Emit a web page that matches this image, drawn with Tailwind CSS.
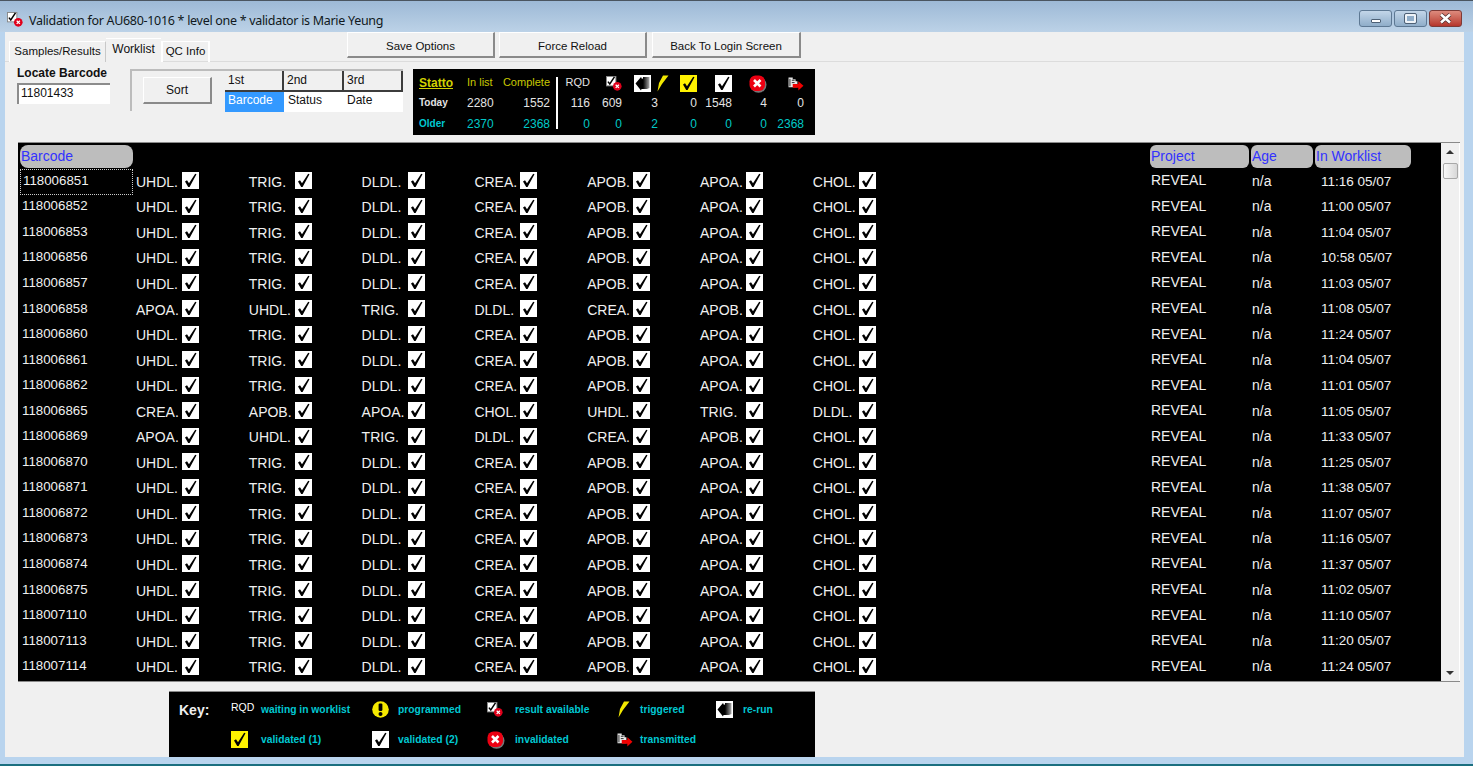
<!DOCTYPE html>
<html lang="en">
<head>
    <meta charset="UTF-8">
    <title>Validation for AU680-1016</title>
    <script src="https://cdn.jsdelivr.net/npm/@tailwindcss/browser@4"></script>
</head>
<body class="bg-[#b9d4ee] overflow-hidden font-['Liberation_Sans',Arial,sans-serif]">
    <!-- shared icons -->
    <svg class="absolute w-0 h-0">
        <defs>
            <linearGradient id="fade" x1="0" x2="1" y1="0" y2="0">
                <stop offset="0" stop-color="#000"/>
                <stop offset="1" stop-color="#aaa"/>
            </linearGradient>
        </defs>
        <symbol id="check" viewBox="0 0 17 17">
            <path d="M3 9.5 L5 8.3 L7 11.3 L13.2 1.8 L14.5 2.3 L7.6 15 L6.2 15 Z" fill="#000"/>
        </symbol>
        <symbol id="result" viewBox="0 0 17 16">
            <rect x="0.5" y="0.5" width="10" height="10" fill="#fff" stroke="#888"/>
            <path d="M2 6 L4 8.5 L9 1" fill="none" stroke="#000" stroke-width="1.6"/>
            <circle cx="12" cy="11" r="4.6" fill="#e0001b"/>
            <path d="M10.3 9.3 L13.7 12.7 M13.7 9.3 L10.3 12.7" stroke="#fff" stroke-width="1.3"/>
        </symbol>
        <symbol id="rerun" viewBox="0 0 17 17">
            <rect width="17" height="17" fill="#fff"/>
            <path d="M1.5 8.5 L7 2 L8 4 L10 2.5 L10 14 L7.5 14 L7 15.5 Z" fill="#000"/>
            <path d="M9 2 H15.5 V13 L13 14 H9 Z" fill="url(#fade)"/>
        </symbol>
        <symbol id="bolt" viewBox="0 0 13 17">
            <path d="M7 0.5 L12.5 0.5 L6 9 L1.5 16.5 L3 8 Z" fill="#f2e800"/>
        </symbol>
        <symbol id="invalid" viewBox="0 0 18 18">
            <circle cx="9.5" cy="9.8" r="8" fill="#777"/>
            <rect x="0.5" y="0.5" width="15.5" height="15.5" rx="6" fill="#ec0012"/>
            <path d="M5 5 L11.5 11.5 M11.5 5 L5 11.5" stroke="#fff" stroke-width="2.6"/>
        </symbol>
        <symbol id="transmit" viewBox="0 0 17 15">
            <path d="M0.5 0.5 H5 V2.5 H8 V4.5 H10 V11 H0.5 Z" fill="#e8e8e8"/>
            <path d="M2 2 V10 M4 3.5 H7 M4 6 H7" stroke="#222" stroke-width="1"/>
            <path d="M5 7.5 H11 V4.5 L16.5 9.5 L11 14.5 V11.5 H5 Z" fill="#f00000"/>
        </symbol>
        <symbol id="programmed" viewBox="0 0 17 17">
            <circle cx="8.5" cy="8.5" r="8.3" fill="#f5e900"/>
            <rect x="6.6" y="2.5" width="3.8" height="7.5" rx="1.2" fill="#000"/>
            <circle cx="8.5" cy="13" r="2" fill="#000"/>
        </symbol>
    </svg>

    <div class="w-[1473px] h-[766px] flex flex-col border-b-2 border-[#1b6f80] overflow-hidden">
        <!-- Title bar -->
        <div class="h-[32px] shrink-0 flex items-center pl-[7px] pr-[11px] pt-[6px] bg-gradient-to-b from-[#9db9d6] to-[#bcd2e7] border-t border-[#4a5560]">
            <svg width="16" height="15" viewBox="0 0 17 16"><use href="#result"/></svg>
            <span class="ml-[6px] mt-[3px] text-[12.5px] text-[#101820] font-['Noto_Sans',sans-serif] tracking-[-0.3px]">Validation for AU680-1016 * level one * validator is Marie Yeung</span>
            <div class="ml-auto flex gap-[2px] -mt-[2px]">
                <div class="w-[33px] h-[17px] rounded-[3px] border border-[#5d7893] bg-gradient-to-b from-[#c3d6e9] to-[#8fadc9] flex items-center justify-center">
                    <div class="w-[10px] h-[4px] mt-[4px] rounded-[1px] bg-white border border-[#4d6075]"></div>
                </div>
                <div class="w-[33px] h-[17px] rounded-[3px] border border-[#5d7893] bg-gradient-to-b from-[#c3d6e9] to-[#8fadc9] flex items-center justify-center">
                    <div class="w-[11px] h-[9px] rounded-[1px] border-2 border-[#eef3f8] outline outline-[#4d6075] bg-[#8fadc9]"></div>
                </div>
                <div class="w-[33px] h-[17px] rounded-[3px] border border-[#7d3a36] bg-gradient-to-b from-[#dd8b7e] to-[#b5342b] flex items-center justify-center">
                    <svg width="13" height="11" viewBox="0 0 13 11"><path d="M2 1.5 L11 9.5 M11 1.5 L2 9.5" stroke="#4a2a2a" stroke-width="4"/><path d="M2 1.5 L11 9.5 M11 1.5 L2 9.5" stroke="#fff" stroke-width="2.6"/></svg>
                </div>
            </div>
        </div>

        <!-- Client area -->
        <div class="ml-[5px] w-[1459px] h-[725px] bg-[#f0f0f0] flex flex-col text-[#111]">
            <!-- Tabs and action buttons -->
            <div class="h-[30px] shrink-0 flex items-end border-b border-[#dcdcdc] pl-[4px] relative">
                <div class="h-[21px] w-[97px] mb-[-1px] bg-[#f0f0f0] border-t border-l border-[#fff] border-r border-r-[#c8c8c8] flex items-center justify-center text-[11.5px]">Samples/Results</div>
                <div class="h-[24px] w-[55px] mb-[-1px] bg-[#f0f0f0] border-t border-[#fff] flex items-center justify-center text-[12px] pb-[3px] relative z-10">Worklist</div>
                <div class="h-[21px] w-[49px] mb-[-1px] border-t border-[#fff] border-r-2 border-l-2 border-[#888] flex items-center justify-center text-[11.5px]">QC Info</div>
                <div class="ml-[137px] mb-[3px] flex">
                    <button class="w-[148px] h-[26px] pt-[4px] text-[11.5px] bg-[#f0f0f0] border-t border-l border-[#fff] border-r-2 border-b-2 border-r-[#8a8a8a] border-b-[#8a8a8a]">Save Options</button>
                    <button class="ml-[4px] w-[148px] h-[26px] pt-[4px] text-[11.5px] bg-[#f0f0f0] border-t border-l border-[#fff] border-r-2 border-b-2 border-r-[#8a8a8a] border-b-[#8a8a8a]">Force Reload</button>
                    <button class="ml-[5px] w-[149px] h-[26px] pt-[4px] text-[11.5px] bg-[#f0f0f0] border-t border-l border-[#fff] border-r-2 border-b-2 border-r-[#8a8a8a] border-b-[#8a8a8a]">Back To Login Screen</button>
                </div>
            </div>

            <!-- Locate, sort and statistics -->
            <div class="mt-[7px] h-[66px] shrink-0 flex items-start pl-[12px]">
                <div class="w-[93px]">
                    <div class="text-[12px] font-bold leading-[14px] mt-[-3px] h-[17px]">Locate Barcode</div>
                    <div class="h-[21px] bg-white border-t-2 border-l-2 border-[#8c8c8c] text-[12px] leading-[17px] pl-[2px]">11801433</div>
                </div>
                <div class="ml-[20px] w-[273px] h-[42px] flex border-t-2 border-l-2 border-[#bcbcbc]">
                    <div class="w-[94px] pl-[11px] pt-[6px]">
                        <button class="w-[69px] h-[27px] text-[12px] bg-[#f0f0f0] border-t border-l border-[#fff] border-r-2 border-b-2 border-r-[#8a8a8a] border-b-[#8a8a8a]">Sort</button>
                    </div>
                    <div class="flex-1 grid grid-cols-[59px_60px_59px] grid-rows-[21px_20px] text-[12px]">
                        <div class="border-r-2 border-b-2 border-[#3c3c3c] pl-[3px] leading-[19px]">1st</div>
                        <div class="border-r-2 border-b-2 border-[#3c3c3c] pl-[3px] leading-[19px]">2nd</div>
                        <div class="border-r-2 border-b-2 border-[#3c3c3c] pl-[3px] leading-[19px]">3rd</div>
                        <div class="bg-[#3399ff] text-white pl-[3px] leading-[17px]">Barcode</div>
                        <div class="bg-white pl-[4px] leading-[17px]">Status</div>
                        <div class="bg-white pl-[3px] leading-[17px]">Date</div>
                    </div>
                </div>

                <!-- Statto panel -->
                <div class="ml-[10px] w-[402px] h-[66px] bg-black pl-[6px] pt-[5px] grid grid-cols-[48px_26px_57px_8px_32px_32px_36px_39px_35px_35px_37px] grid-rows-[19px_20px_21px] items-center text-[12px] text-[#e4e4e4] whitespace-nowrap">
                    <div class="font-bold underline text-[#d2d200] -mt-[2px]">Statto</div>
                    <div class="text-[11px] text-[#c8c800] -mt-[2px]">In list</div>
                    <div class="text-right text-[11px] text-[#c8c800] -mt-[2px]">Complete</div>
                    <div class="row-span-3 h-[52px] w-[2px] bg-white self-start justify-self-end mt-[3px]"></div>
                    <div class="text-right text-[11px] -mt-[2px]">RQD</div>
                    <div class="flex justify-end"><svg width="16" height="15"><use href="#result"/></svg></div>
                    <div class="flex ml-[12px] w-[34px] gap-[5px]"><svg width="17" height="17" class="shrink-0"><use href="#rerun"/></svg><svg width="13" height="17" class="shrink-0"><use href="#bolt"/></svg></div>
                    <div class="flex justify-end"><div class="w-[17px] h-[17px] bg-[#fff200]"><svg width="17" height="17"><use href="#check"/></svg></div></div>
                    <div class="flex justify-end"><div class="w-[17px] h-[17px] bg-white"><svg width="17" height="17"><use href="#check"/></svg></div></div>
                    <div class="flex justify-end"><svg width="18" height="18"><use href="#invalid"/></svg></div>
                    <div class="flex justify-end"><svg width="16" height="14"><use href="#transmit"/></svg></div>

                    <div class="font-bold text-[10px] -mt-[1px]">Today</div>
                    <div class="text-right">2280</div>
                    <div class="text-right">1552</div>
                    <div class="text-right">116</div>
                    <div class="text-right">609</div>
                    <div class="text-right">3</div>
                    <div class="text-right">0</div>
                    <div class="text-right">1548</div>
                    <div class="text-right">4</div>
                    <div class="text-right">0</div>

                    <div class="font-bold text-[10px] text-[#00c8d2] -mt-[1px]">Older</div>
                    <div class="text-right text-[#00c8c8]">2370</div>
                    <div class="text-right text-[#00c8c8]">2368</div>
                    <div class="text-right text-[#00c8c8]">0</div>
                    <div class="text-right text-[#00c8c8]">0</div>
                    <div class="text-right text-[#00c8c8]">2</div>
                    <div class="text-right text-[#00c8c8]">0</div>
                    <div class="text-right text-[#00c8c8]">0</div>
                    <div class="text-right text-[#00c8c8]">0</div>
                    <div class="text-right text-[#00c8c8]">2368</div>
                </div>
            </div>

            <!-- Worklist table -->
            <div class="mt-[7px] ml-[13px] w-[1442px] h-[540px] shrink-0 flex border-t border-b border-[#8a8a8a]">
                <div class="w-[1423px] bg-black pt-[2px] text-[14px] text-[#f0f0f0]">
                    <div class="h-[23px] mb-[1px] pl-[2px] grid grid-cols-[113px_3px_791px_1fr_99px_2px_62px_2px_96px_30px] text-[14px] text-[#3232ff]">
                        <div class="bg-[#bdbdbd] rounded-[8px] pl-[1px] leading-[23px]">Barcode</div>
                        <div class="col-start-5 bg-[#bdbdbd] rounded-[6px] pl-[1px] leading-[23px]">Project</div>
                        <div class="col-start-7 bg-[#bdbdbd] rounded-[6px] pl-[1px] leading-[23px]">Age</div>
                        <div class="col-start-9 bg-[#bdbdbd] rounded-[6px] pl-[1px] leading-[23px]">In Worklist</div>
                    </div>
                    <div id="rows"></div>
                </div>
                <!-- Scrollbar -->
                <div class="w-[19px] bg-[#f0f0f0] border-r border-white flex flex-col items-center pt-[7px] pb-[6px]">
                    <div class="w-0 h-0 border-x-[4px] border-x-transparent border-b-[4px] border-b-[#333]"></div>
                    <div class="mt-[9px] w-[15px] h-[16px] rounded-[2px] border border-[#a8a8a8] bg-gradient-to-r from-[#f8f8f8] to-[#d8d8d8]"></div>
                    <div class="mt-auto w-0 h-0 border-x-[4px] border-x-transparent border-t-[4px] border-t-[#333]"></div>
                </div>
            </div>

            <!-- Key -->
            <div class="mt-[9px] ml-[164px] w-[646px] h-[66px] bg-black border-t border-[#888] pl-[10px] pt-[2px] grid grid-cols-[52px_30px_111px_26px_89px_28px_102px_23px_76px_27px_72px] grid-rows-[30px_31px] items-center text-[10.3px] font-bold text-[#00c8d2] whitespace-nowrap">
                <div class="text-[14px] text-[#eee] pt-[3px]">Key:</div>
                <div class="text-[10.5px] font-normal text-white -mt-[3px]">RQD</div>
                <div class="pt-[1px]">waiting in worklist</div>
                <svg width="17" height="17"><use href="#programmed"/></svg>
                <div class="pt-[1px]">programmed</div>
                <svg width="16" height="15"><use href="#result"/></svg>
                <div class="pt-[1px]">result available</div>
                <svg width="13" height="17"><use href="#bolt"/></svg>
                <div class="pt-[1px]">triggered</div>
                <svg width="17" height="17"><use href="#rerun"/></svg>
                <div class="pt-[1px]">re-run</div>

                <div class="col-start-2 w-[17px] h-[17px] bg-[#fff200]"><svg width="17" height="17"><use href="#check"/></svg></div>
                <div>validated (1)</div>
                <div class="w-[17px] h-[17px] bg-white"><svg width="17" height="17"><use href="#check"/></svg></div>
                <div>validated (2)</div>
                <svg width="18" height="18"><use href="#invalid"/></svg>
                <div>invalidated</div>
                <svg width="16" height="14"><use href="#transmit"/></svg>
                <div>transmitted</div>
            </div>
        </div>
    </div>

    <script>
        const STD = ['UHDL.', 'TRIG.', 'DLDL.', 'CREA.', 'APOB.', 'APOA.', 'CHOL.'];
        const APOA = ['APOA.', 'UHDL.', 'TRIG.', 'DLDL.', 'CREA.', 'APOB.', 'CHOL.'];
        const CREA = ['CREA.', 'APOB.', 'APOA.', 'CHOL.', 'UHDL.', 'TRIG.', 'DLDL.'];

        const samples = [
            ['118006851', STD, '11:16'], ['118006852', STD, '11:00'], ['118006853', STD, '11:04'],
            ['118006856', STD, '10:58'], ['118006857', STD, '11:03'], ['118006858', APOA, '11:08'],
            ['118006860', STD, '11:24'], ['118006861', STD, '11:04'], ['118006862', STD, '11:01'],
            ['118006865', CREA, '11:05'], ['118006869', APOA, '11:33'], ['118006870', STD, '11:25'],
            ['118006871', STD, '11:38'], ['118006872', STD, '11:07'], ['118006873', STD, '11:16'],
            ['118006874', STD, '11:37'], ['118006875', STD, '11:02'], ['118007110', STD, '11:10'],
            ['118007113', STD, '11:20'], ['118007114', STD, '11:24']
        ];

        // Build the worklist rows
        document.getElementById('rows').innerHTML = samples.map(([barcode, tests, time], i) => `
            <div class="h-[25.55px] pl-[2px] grid grid-cols-[116px_repeat(7,112.8px)_1fr_101px_64px_96px_30px] items-center">
                <div class="h-full flex items-center w-[113px] pl-[2px] text-[13.3px] pb-[2px] ${i === 0 ? 'border border-dotted border-[#ccc]' : ''}">${barcode}</div>
                ${tests.map(t => `
                <div class="flex items-center">
                    <span class="w-[46px] pt-[1px]">${t}</span>
                    <div class="w-[17px] h-[17px] bg-white -mt-[2px]"><svg width="17" height="17"><use href="#check"/></svg></div>
                </div>`).join('')}
                <div></div>
                <div class="pl-[1px] pb-[2px]">REVEAL</div>
                <div class="pl-[1px] pb-[1px] text-[14px]">n/a</div>
                <div class="pl-[6px] text-[13.5px]">${time} 05/07</div>
                <div></div>
            </div>`).join('');
    </script>
</body>
</html>
